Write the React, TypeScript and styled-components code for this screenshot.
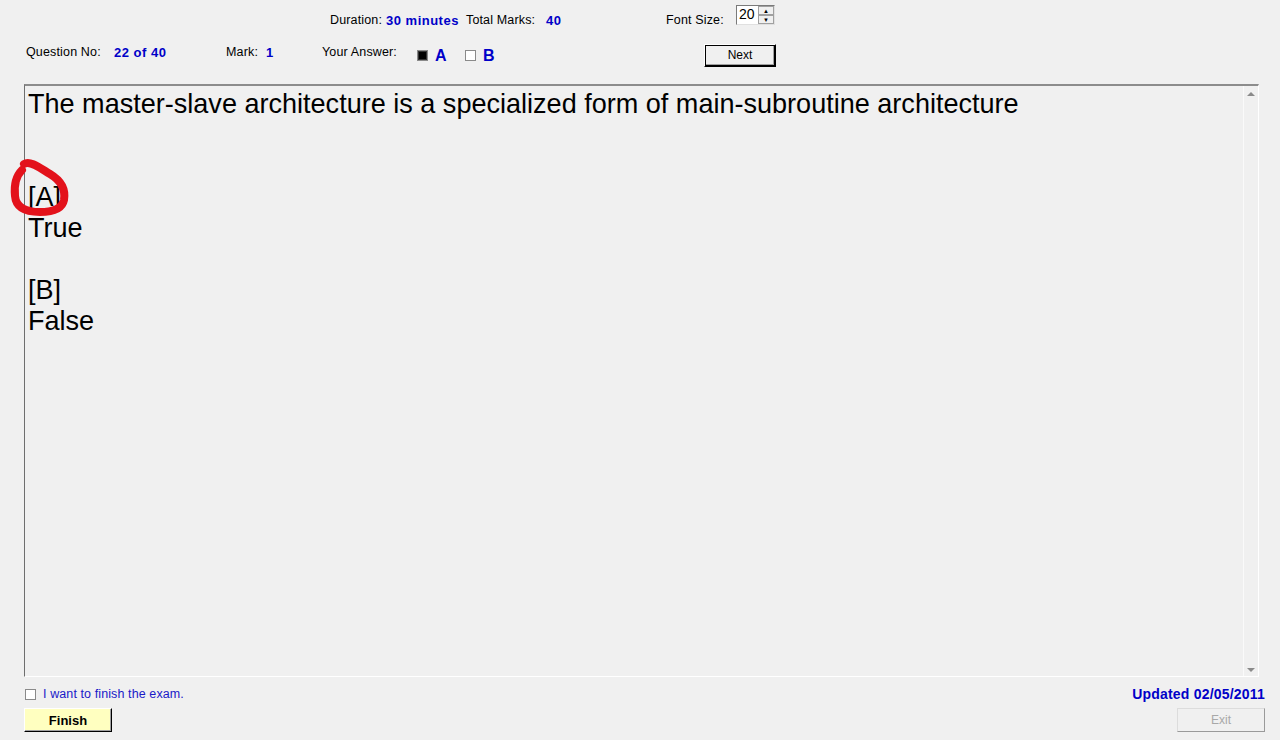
import React from "react";
import styled, { createGlobalStyle } from "styled-components";

const Global = createGlobalStyle`
  html, body { margin: 0; padding: 0; background: #f0f0f0; }
  body { font-family: "Liberation Sans", Arial, sans-serif; color: #000; }
`;

const Page = styled.div`
  position: relative;
  width: 1280px;
  height: 740px;
  background: #f0f0f0;
  display: flex;
  flex-direction: column;
  overflow: hidden;
`;

const Row = styled.div<{ $h: number; $pl: number; $mt?: number }>`
  display: flex;
  align-items: center;
  height: ${(p) => p.$h}px;
  margin-top: ${(p) => p.$mt ?? 0}px;
  padding-left: ${(p) => p.$pl}px;
  font-size: 12px;
`;

const Cell = styled.div<{ $w?: number; $dy?: number }>`
  display: flex;
  align-items: center;
  flex: none;
  ${(p) => (p.$w ? `width: ${p.$w}px;` : "")}
  ${(p) => (p.$dy ? `margin-top: ${p.$dy}px;` : "")}
`;

const Label = styled.span`
  font-size: 12.5px;
  letter-spacing: 0.15px;
  color: #000;
  white-space: nowrap;
`;

const Value = styled.span<{ $size?: number }>`
  font-size: ${(p) => p.$size ?? 13}px;
  letter-spacing: ${(p) => (p.$size ? 0 : 0.5)}px;
  font-weight: bold;
  color: #0000c8;
  white-space: nowrap;
`;

const Box = styled.span<{ $checked?: boolean }>`
  display: inline-block;
  box-sizing: border-box;
  width: 11px;
  height: 11px;
  border: 1px solid #8a8a8a;
  background: ${(p) => (p.$checked ? "#000" : "#fff")};
  box-shadow: ${(p) => (p.$checked ? "inset 0 0 0 1px #333" : "none")};
  margin-right: 7px;
  flex: none;
`;

const Spin = styled.div`
  display: flex;
  box-sizing: border-box;
  width: 39px;
  height: 20px;
  border: 1px solid #7a7a7a;
  border-right-color: #e0e0e0;
  border-bottom-color: #e0e0e0;
  background: #fff;
  margin-top: -10px;
`;

const SpinText = styled.span`
  flex: 1;
  font-size: 14px;
  line-height: 17px;
  padding-left: 2px;
`;

const SpinBtns = styled.div`
  display: flex;
  flex-direction: column;
  width: 16px;
`;

const SpinBtn = styled.div`
  flex: 1;
  box-sizing: border-box;
  border: 1px solid #a0a0a0;
  background: #f0f0f0;
  display: flex;
  align-items: center;
  justify-content: center;
  font-size: 6px;
  line-height: 1;
  color: #000;
`;

const Button = styled.button<{ $w: number; $h: number; $bg?: string; $bold?: boolean; $disabled?: boolean }>`
  box-sizing: border-box;
  width: ${(p) => p.$w}px;
  height: ${(p) => p.$h}px;
  padding: 0;
  background: ${(p) => p.$bg ?? "#f0f0f0"};
  font-family: "Liberation Sans", Arial, sans-serif;
  font-size: ${(p) => (p.$bold ? 13 : 12)}px;
  font-weight: ${(p) => (p.$bold ? "bold" : "normal")};
  color: ${(p) => (p.$disabled ? "#a8a8a8" : "#000")};
  border: 1px solid ${(p) => (p.$disabled ? "#dcdcdc" : "#fff")};
  border-right-color: ${(p) => (p.$disabled ? "#9a9a9a" : "#000")};
  border-bottom-color: ${(p) => (p.$disabled ? "#9a9a9a" : "#000")};
  box-shadow: ${(p) =>
    p.$disabled ? "none" : p.$bold ? "inset -1px -1px 0 #a0a0a0" : "0 0 0 1px #000 inset, inset -2px -2px 0 #a0a0a0"};
  flex: none;
`;

const Panel = styled.div`
  margin-left: 24px;
  margin-top: 19px;
  width: 1235px;
  height: 593px;
  box-sizing: border-box;
  border-top: 2px solid #8c8c8c;
  border-left: 1px solid #6e6e6e;
  border-bottom: 1px solid #ffffff;
  border-right: 1px solid #ffffff;
  display: flex;
  flex: none;
`;

const Content = styled.div`
  flex: 1;
  padding: 3px 0 0 3px;
  font-size: 27.05px;
  line-height: 31px;
  white-space: pre;
`;

const ScrollBar = styled.div`
  width: 14px;
  border-left: 1px solid #fafafa;
  background: #f0f0f0;
  display: flex;
  flex-direction: column;
  justify-content: space-between;
  align-items: center;
  padding: 6px 0 4px;
`;

const Arrow = styled.div<{ $down?: boolean }>`
  width: 0;
  height: 0;
  border-left: 4px solid transparent;
  border-right: 4px solid transparent;
  ${(p) => (p.$down ? "border-top: 4px solid #8a8a8a;" : "border-bottom: 4px solid #8a8a8a;")}
`;

const Footer = styled.div`
  display: flex;
  justify-content: space-between;
  padding: 0 15px 0 24px;
  margin-top: 10px;
`;

const FooterCol = styled.div<{ $end?: boolean }>`
  display: flex;
  flex-direction: column;
  align-items: ${(p) => (p.$end ? "flex-end" : "flex-start")};
  gap: 7px;
`;

const FinishLine = styled.div`
  display: flex;
  align-items: center;
  height: 14px;
  font-size: 12.5px;
  letter-spacing: 0.1px;
  color: #1a1ac8;
  padding-left: 1px;
`;

const Updated = styled.div`
  height: 14px;
  display: flex;
  align-items: center;
  font-size: 14px;
  letter-spacing: 0.2px;
  font-weight: bold;
  color: #0000c8;
`;

const Scribble = styled.svg`
  position: absolute;
  left: 0;
  top: 150px;
  width: 80px;
  height: 80px;
  pointer-events: none;
`;

const question = `The master-slave architecture is a specialized form of main-subroutine architecture


[A]
True

[B]
False`;

export default function App() {
  return (
    <Page>
      <Global />
      <Row $h={38} $pl={330} $mt={1}>
        <Cell $w={56}><Label>Duration:</Label></Cell>
        <Cell $w={80}><Value>30 minutes</Value></Cell>
        <Cell $w={80}><Label>Total Marks:</Label></Cell>
        <Cell $w={120}><Value>40</Value></Cell>
        <Cell $w={70}><Label>Font Size:</Label></Cell>
        <Cell>
          <Spin>
            <SpinText>20</SpinText>
            <SpinBtns>
              <SpinBtn>▲</SpinBtn>
              <SpinBtn>▼</SpinBtn>
            </SpinBtns>
          </Spin>
        </Cell>
      </Row>
      <Row $h={26} $pl={26}>
        <Cell $w={88}><Label>Question No:</Label></Cell>
        <Cell $w={112}><Value>22 of 40</Value></Cell>
        <Cell $w={40}><Label>Mark:</Label></Cell>
        <Cell $w={56}><Value>1</Value></Cell>
        <Cell $w={95}><Label style={{ marginTop: -1 }}>Your Answer:</Label></Cell>
        <Cell $w={48} $dy={7}><Box $checked /><Value $size={16}>A</Value></Cell>
        <Cell $w={239} $dy={7}><Box /><Value $size={16}>B</Value></Cell>
        <Cell $dy={6}>
          <Button $w={72} $h={23}>Next</Button>
        </Cell>
      </Row>
      <Panel>
        <Content>{question}</Content>
        <ScrollBar>
          <Arrow />
          <Arrow $down />
        </ScrollBar>
      </Panel>
      <Footer>
        <FooterCol>
          <FinishLine><Box />I want to finish the exam.</FinishLine>
          <Button $w={88} $h={24} $bg="#ffffc0" $bold>Finish</Button>
        </FooterCol>
        <FooterCol $end>
          <Updated>Updated 02/05/2011</Updated>
          <Button $w={88} $h={24} $disabled>Exit</Button>
        </FooterCol>
      </Footer>
      <Scribble viewBox="0 150 80 80">
        <path
          d="M24 164 C30 160 40 168 50 174 C60 180 66 188 64 200 C62 210 52 212 40 212 C26 212 16 208 15 196 C14 186 16 176 22 170"
          fill="none"
          stroke="#e3121b"
          strokeWidth="8"
          strokeLinecap="round"
          strokeLinejoin="round"
        />
      </Scribble>
    </Page>
  );
}
